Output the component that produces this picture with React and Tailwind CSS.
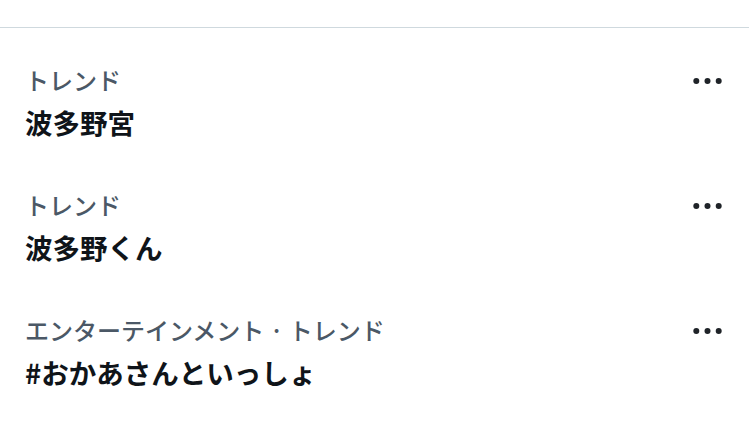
const trends = [
  { label: "トレンド", title: "波多野宮" },
  { label: "トレンド", title: "波多野くん" },
  { label: "エンターテインメント · トレンド", title: "#おかあさんといっしょ" },
];

const MoreIcon = () => (
  <svg width="29" height="10" viewBox="0 0 29 10" className="mt-[12px] shrink-0">
    <circle cx="3.3" cy="5" r="3" fill="#1f2328" />
    <circle cx="14.5" cy="5" r="3" fill="#1f2328" />
    <circle cx="25.7" cy="5" r="3" fill="#1f2328" />
  </svg>
);

const App = () => {
  return (
    <div
      className="w-[749px] h-[421px] overflow-hidden bg-white"
      style={{ fontFamily: '"Noto Sans CJK JP", "Noto Sans", sans-serif' }}
    >
      <div className="h-[28px] border-b border-[#cfd9de]" />

      {trends.map((t, i) => (
        <div key={i} className="flex justify-between pl-[25px] pr-[27px] pt-[36px] pb-[13px]">
          <div className="flex flex-col">
            <span className="text-[24px] leading-[32px] font-medium text-[#4b5866]">
              {t.label}
            </span>
            <span className="mt-2 text-[27.5px] leading-[36px] font-bold text-[#0f1419]">
              {t.title}
            </span>
          </div>
          <MoreIcon />
        </div>
      ))}
    </div>
  );
};

export default App;
